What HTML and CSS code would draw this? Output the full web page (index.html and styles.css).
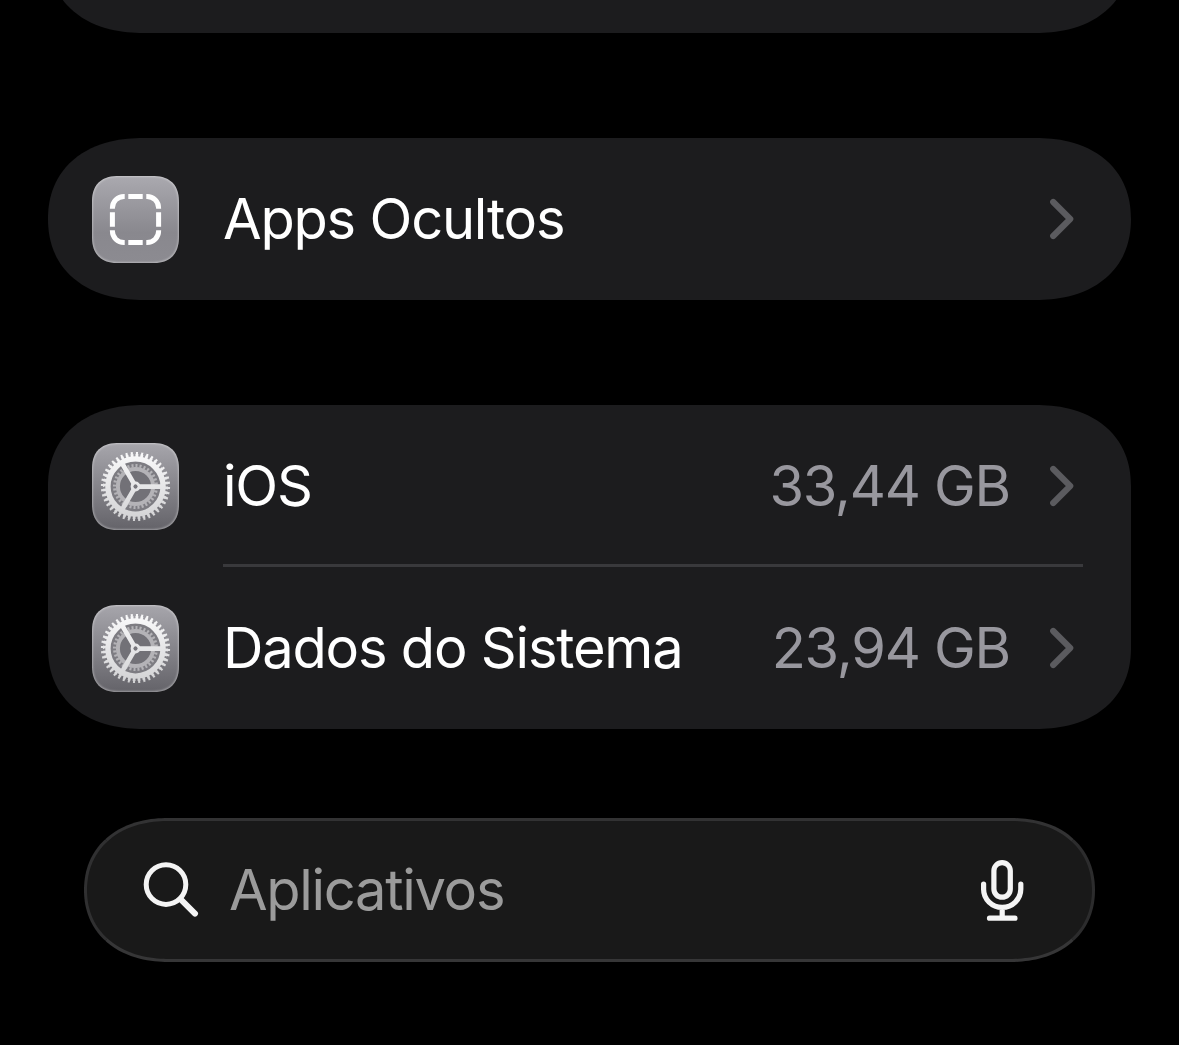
FILE: index.html
```html
<!DOCTYPE html>
<html lang="pt-BR">

<head>
    <meta charset="UTF-8">
    <meta name="viewport" content="width=device-width, initial-scale=1.0">
    <title>Aplicativos</title>
    <link rel="stylesheet" href="styles.css">
</head>

<body>

    <!-- Shared icons -->
    <svg class="symbols" width="0" height="0">
        <defs>
            <linearGradient id="gearFill" x1="0" y1="0" x2="0" y2="87" gradientUnits="userSpaceOnUse">
                <stop offset="0.1" stop-color="#fafafb" />
                <stop offset="0.9" stop-color="#d2d2d4" />
            </linearGradient>
        </defs>
        <symbol id="gear" viewBox="0 0 87 87">
            <circle cx="43.5" cy="43.5" r="25" fill="#7d7c82" />
            <circle cx="43.5" cy="43.5" r="16" fill="#727177" />
            <g fill="none" stroke="#b4b3b7">
                <circle cx="43.5" cy="43.5" r="17.6" stroke-width="4" />
                <circle cx="43.5" cy="43.5" r="20.9" stroke-width="3.2" pathLength="64" stroke-dasharray="1 1" />
            </g>
            <g fill="none" stroke="url(#gearFill)">
                <circle cx="43.5" cy="43.5" r="27.6" stroke-width="5.4" />
                <circle cx="43.5" cy="43.5" r="31.1" stroke-width="3" pathLength="80" stroke-dasharray="1.15 0.85" />
                <circle cx="43.5" cy="43.5" r="33.3" stroke-width="2.6" pathLength="80" stroke-dasharray="0.8 1.2" stroke-dashoffset="-0.17" />
                <path d="M46.5 43.6H69M42 40.9L30.7 21.4M42 46.1L30.7 65.6" stroke-width="4.8" />
                <circle cx="43.5" cy="43.5" r="3.4" stroke-width="3" />
            </g>
            <circle cx="43.5" cy="43.5" r="1.9" fill="#77767c" />
        </symbol>
        <symbol id="chevron" viewBox="0 0 24 42">
            <path d="M3.2 4L20.2 21L3.2 38" fill="none" stroke="#5b5b5f" stroke-width="6.2" stroke-linecap="round" stroke-linejoin="round" />
        </symbol>
    </svg>

    <div class="container">
        <div class="card card-top"></div>

        <div class="card">
            <div class="row">
                <div class="app-icon hidden-icon">
                    <svg viewBox="0 0 87 87">
                        <g fill="none" stroke="#fff" stroke-width="5">
                            <path d="M36.3 20.4H50.7M36.3 66.6H50.7M20.4 36.3V50.7M66.6 36.3V50.7" />
                            <path d="M20.4 32.7V32A11.6 11.6 0 0 1 32 20.4H32.7M54.3 20.4H55A11.6 11.6 0 0 1 66.6 32V32.7M66.6 54.3V55A11.6 11.6 0 0 1 55 66.6H54.3M32.7 66.6H32A11.6 11.6 0 0 1 20.4 55V54.3" />
                        </g>
                    </svg>
                </div>
                <div class="row-body">
                    <span class="label">Apps Ocultos</span>
                    <svg class="chevron"><use href="#chevron" /></svg>
                </div>
            </div>
        </div>

        <div class="card">
            <div class="row">
                <div class="app-icon system-icon"><svg><use href="#gear" /></svg></div>
                <div class="row-body divider">
                    <span class="label">iOS</span>
                    <span class="size">33,44 GB</span>
                    <svg class="chevron"><use href="#chevron" /></svg>
                </div>
            </div>
            <div class="row">
                <div class="app-icon system-icon"><svg><use href="#gear" /></svg></div>
                <div class="row-body">
                    <span class="label">Dados do Sistema</span>
                    <span class="size">23,94 GB</span>
                    <svg class="chevron"><use href="#chevron" /></svg>
                </div>
            </div>
        </div>

        <div class="search">
            <svg class="search-icon" viewBox="0 0 56 56" fill="none" stroke="#f4f4f4" stroke-linecap="round">
                <circle cx="23" cy="22.6" r="19.8" stroke-width="5" />
                <path d="M37.5 37.1L52 51.6" stroke-width="6" />
            </svg>
            <span class="placeholder">Aplicativos</span>
            <svg class="mic-icon" viewBox="0 0 44 62" fill="none" stroke="#f4f4f4" stroke-width="5.2" stroke-linecap="round">
                <rect x="13.9" y="3.6" width="16.4" height="34.6" rx="8.2" />
                <path d="M3.6 25V30.3A18.6 18.1 0 0 0 40.8 30.3V25M22.2 49V59M9.5 59.2H35" />
            </svg>
        </div>
    </div>

</body>

</html>
```

FILE: styles.css
```css
body {
    font-family: 'Inter', sans-serif;
    margin: 0;
    height: 1045px;
    background-color: #000;
    color: #fff;
    overflow: hidden;
}

.symbols {
    display: block;
}

.container {
    display: flex;
    flex-direction: column;
    gap: 105px;
    padding: 0 48px;
}

.card {
    background-color: #1c1c1e;
    border-radius: 83px / 81px;
}

.card-top {
    height: 162px;
    margin-top: -129px;
}

.row {
    display: flex;
    align-items: center;
    gap: 44px;
    height: 162px;
    padding-left: 44px;
}

.app-icon {
    box-sizing: border-box;
    flex: none;
    width: 87px;
    height: 87px;
    border-radius: 23px;
    box-shadow: inset 0 0 2px 1px rgba(255, 255, 255, 0.35);
}

.app-icon svg {
    display: block;
    width: 87px;
    height: 87px;
}

.hidden-icon {
    background: linear-gradient(#aaa9af, #89888e 65%, #8c8b91);
}

.system-icon {
    background: linear-gradient(#a7a6ac, #646369);
}

.row-body {
    box-sizing: border-box;
    display: flex;
    flex: 1;
    align-items: center;
    height: 162px;
    margin-right: 48px;
    padding-right: 9px;
    font-size: 56px;
    white-space: nowrap;
}

.divider {
    padding-top: 3px;
    border-bottom: 3px solid #39393c;
}

.label {
    flex: 1;
    letter-spacing: -1.2px;
}

.label,
.size,
.placeholder {
    padding-bottom: 1px;
}

.size {
    margin-right: 40px;
    color: #98979e;
    letter-spacing: -1.25px;
}

.chevron {
    width: 24px;
    height: 42px;
}

.search {
    box-sizing: border-box;
    display: flex;
    align-items: center;
    height: 144px;
    margin: -16px 36px 0;
    padding: 0 68px 0 56px;
    border: 3px solid #303031;
    border-color: #323233 #2c2c2d #363637 #303031;
    border-radius: 76px / 72px;
    background-color: #191919;
}

.search-icon {
    width: 56px;
    height: 56px;
}

.placeholder {
    flex: 1;
    margin-left: 30px;
    color: #9b9b9b;
    font-size: 56px;
    letter-spacing: -1.3px;
}

.mic-icon {
    width: 44px;
    height: 62px;
}

/* Smoother corners where the browser can draw them */
@supports (corner-shape: superellipse(1.15)) {
    .card {
        border-radius: 95px / 81px;
        corner-shape: superellipse(1.15);
    }

    .search {
        border-radius: 84px / 72px;
        corner-shape: superellipse(1.12);
    }

    .app-icon {
        border-radius: 27px;
        corner-shape: superellipse(1.3);
    }
}
```
